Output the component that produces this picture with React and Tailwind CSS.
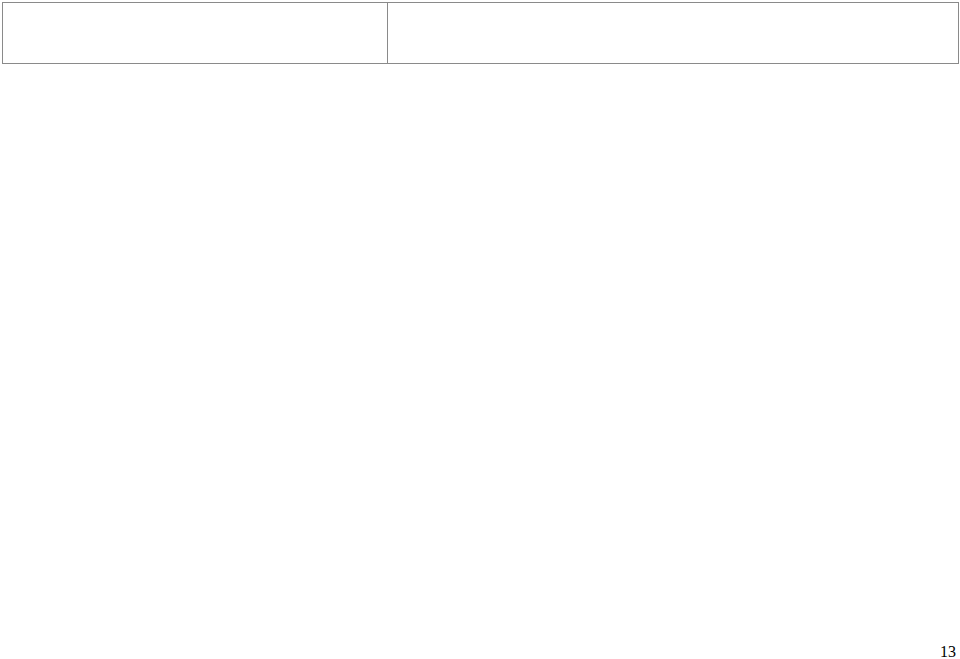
export default function App() {
  return (
    <div className="flex h-[659px] w-[960px] flex-col bg-white overflow-hidden" style={{ fontFamily: '"Liberation Serif", serif' }}>
      {/* header table */}
      <div className="ml-[2px] mt-[2px] flex h-[62px] w-[957px] border border-[#8a8a8a]">
        <div className="w-[385px] border-r border-[#8a8a8a]"></div>
        <div className="flex-1"></div>
      </div>

      {/* page number */}
      <div className="mt-auto flex justify-end pr-[4px]">
        <span className="text-[16px] leading-[14px] text-black">13</span>
      </div>
    </div>
  );
}
